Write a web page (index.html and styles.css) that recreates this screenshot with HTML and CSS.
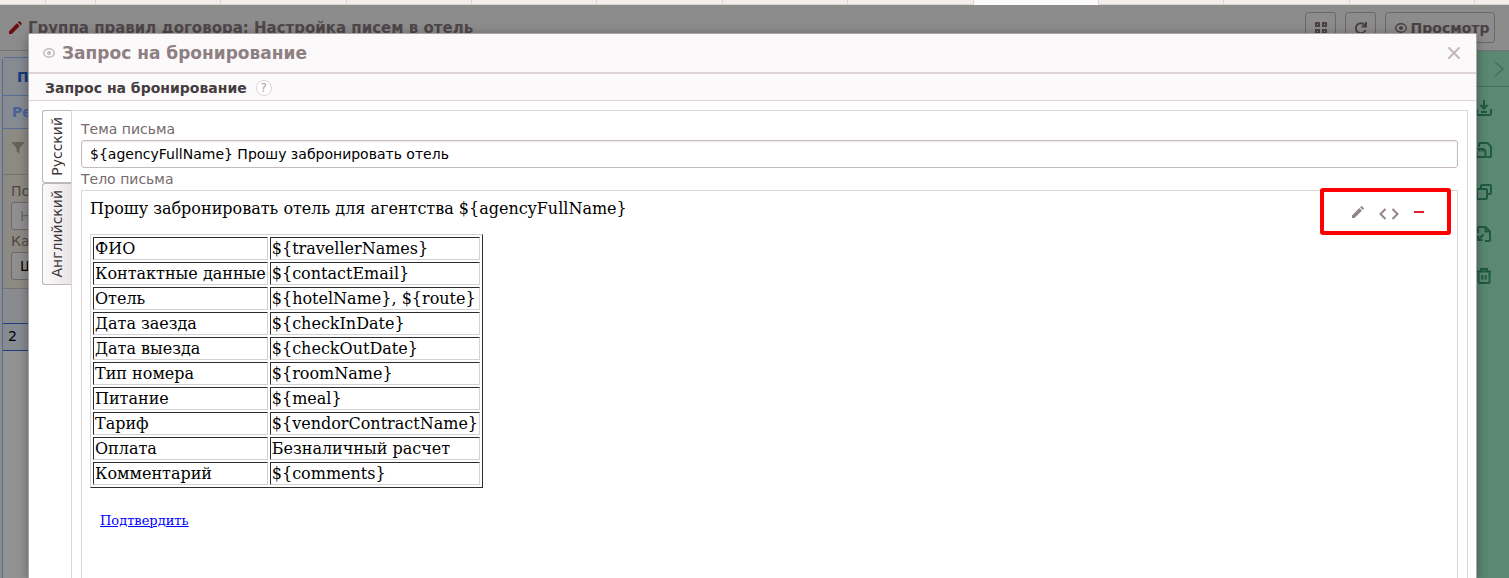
FILE: index.html
```html
<!DOCTYPE html>
<html lang="ru">
<head>
<meta charset="utf-8">
<title>Запрос на бронирование</title>
<link rel="stylesheet" href="styles.css">
</head>
<body>
<div class="app">
  <nav class="tabs" aria-label="Вкладки">
    <span class="tab tab-home"></span><span class="tab tab-small"></span><span class="tab"></span><span class="tab"></span><span class="tab"></span><span class="tab"></span><span class="tab"></span><span class="tab"></span><span class="tab"></span><span class="tab tab-active"></span><span class="tab"></span><span class="tab"></span><span class="tab"></span><span class="tab tab-last"></span>
  </nav>
  <header class="page-head">
    <svg class="pencil" viewBox="0 0 12 12" width="13" height="13"><path d="M0 12V9.400L7.300 2.100 9.900 4.700 2.600 12ZM8.100 1.300 9.100.300Q9.500 0 9.900.300L11.700 2.100Q12 2.500 11.700 2.900L10.700 3.900Z" fill="#6d0d14"/></svg>
    <h1 class="page-title">Группа правил договора: Настройка писем в отель</h1>
    <div class="page-actions">
      <button class="btn" aria-label="Плитка"><svg viewBox="0 0 12 12" width="12" height="12" fill="none" stroke="#4c4145" stroke-width="2"><path d="M1 1h3v3H1zM8 1h3v3H8zM1 8h3v3H1zM8 8h3v3H8z"/></svg></button>
      <button class="btn" aria-label="Обновить"><svg viewBox="0 0 12 12" width="12" height="12" fill="none" stroke="#4c4145" stroke-width="2"><path d="M10 3.500A5 5 0 1 0 10.500 8M11 0v4.500H6.500"/></svg></button>
      <button class="btn btn-wide"><svg viewBox="0 0 12 12" width="12" height="12" fill="none" stroke="#4c4145"><ellipse cx="6" cy="6" rx="5.300" ry="4.200" stroke-width="1.400"/><circle cx="6" cy="6" r="1" stroke-width="2"/></svg>Просмотр</button>
    </div>
  </header>
  <div class="workspace">
    <section class="panel">
      <div class="panel-tab">П</div>
      <div class="panel-sub">Ре</div>
      <div class="filter-bar"><svg viewBox="0 0 12 12" width="12" height="12"><path d="M0 0h12v1L7.500 6v5.500L4.500 9V6L0 1Z" fill="#65615b"/></svg></div>
      <div class="filter-form">
        <label class="f-label" for="f1">По</label>
        <input class="f-input" id="f1" type="text" placeholder="Н">
        <label class="f-label" for="f2">Ка</label>
        <input class="f-input" id="f2" type="text" value="Ш">
      </div>
      <div class="list-head"></div>
      <div class="list-row">2</div>
      <div class="list-rest"></div>
    </section>
    <aside class="rail">
      <button class="rail-toggle" aria-label="Развернуть"><svg viewBox="0 0 10 16" width="10" height="16" fill="none" stroke="#42705a" stroke-width="1.500"><path d="M1 1 9 8 1 15"/></svg></button>
      <button class="rail-btn" aria-label="Скачать"><svg viewBox="0 0 16 16"><path d="M1 9v4.500Q1 15 2.500 15h11Q15 15 15 13.500V9M8 0v8M4.500 5 8 8.500 11.500 5M5 12h6"/></svg></button>
      <button class="rail-btn" aria-label="Сохранить"><svg viewBox="0 0 16 16"><path d="M3 5V2Q3 1 4 1h7.500L15 4.500V14q0 1-1 1h-3M0 7h7.500L9.500 9v6H1zM3.500 7v2.500M6.500 7v2.500"/></svg></button>
      <button class="rail-btn" aria-label="Копировать"><svg viewBox="0 0 16 16"><path d="M5 5V2Q5 1 6 1h8q1 0 1 1v7q0 1-1 1h-3M2 5h8q1 0 1 1v8q0 1-1 1H2q-1 0-1-1V6q0-1 1-1Z"/></svg></button>
      <button class="rail-btn" aria-label="Импорт"><svg viewBox="0 0 16 16"><path d="M2 7V2Q2 1 3 1h6.500L14 5.500V14q0 1-1 1H9M9.500 1v4.500H14M7.500 8.500 2 14M2 9.500V14h4.500"/></svg></button>
      <button class="rail-btn" aria-label="Удалить"><svg viewBox="0 0 16 16"><path d="M1 3.500h14M5 3V1h6v2M2.500 4v9.500Q2.500 15 4 15h8q1.500 0 1.500-1.500V4M6.300 7v4.500M9.700 7v4.500"/></svg></button>
    </aside>
  </div>

  <div class="modal" role="dialog" aria-labelledby="dlg-title">
    <header class="modal-head">
      <svg viewBox="0 0 12 10" width="12" height="10" fill="none" stroke="#c3b9bb"><ellipse cx="6" cy="5" rx="5.200" ry="4.200" stroke-width="1.500"/><circle cx="6" cy="5" r="1" stroke-width="2"/></svg>
      <h2 class="modal-title" id="dlg-title">Запрос на бронирование</h2>
      <button class="close" aria-label="Закрыть"><svg viewBox="0 0 12 12" width="12" height="12" stroke="#c3b8ba" stroke-width="2" stroke-linecap="round"><path d="M1 1 11 11M11 1 1 11"/></svg></button>
    </header>
    <div class="modal-sub">
      <h3 class="sub-title">Запрос на бронирование</h3>
      <button class="help">?</button>
    </div>
    <div class="modal-body">
      <div class="langs" role="tablist">
        <button class="lang lang-on" role="tab"><span>Русский</span></button>
        <button class="lang" role="tab"><span>Английский</span></button>
      </div>
      <div class="letter">
        <label class="label" for="subject">Тема письма</label>
        <input class="subject" id="subject" type="text" value="${agencyFullName} Прошу забронировать отель">
        <div class="label">Тело письма</div>
        <div class="content">
          <p class="intro">Прошу забронировать отель для агентства ${agencyFullName}</p>
          <table class="data">
            <tr><td>ФИО</td><td>${travellerNames}</td></tr>
            <tr><td>Контактные данные</td><td>${contactEmail}</td></tr>
            <tr><td>Отель</td><td>${hotelName}, ${route}</td></tr>
            <tr><td>Дата заезда</td><td>${checkInDate}</td></tr>
            <tr><td>Дата выезда</td><td>${checkOutDate}</td></tr>
            <tr><td>Тип номера</td><td>${roomName}</td></tr>
            <tr><td>Питание</td><td>${meal}</td></tr>
            <tr><td>Тариф</td><td>${vendorContractName}</td></tr>
            <tr><td>Оплата</td><td>Безналичный расчет</td></tr>
            <tr><td>Комментарий</td><td>${comments}</td></tr>
          </table>
          <a class="confirm" href="#">Подтвердить</a>
          <div class="tools">
            <button class="tool" aria-label="Редактировать"><svg viewBox="0 0 12 12" width="12" height="12"><path d="M0 12V9.400L7.300 2.100 9.900 4.700 2.600 12ZM8.100 1.300 9.100.300Q9.500 0 9.900.300L11.700 2.100Q12 2.500 11.700 2.900L10.700 3.900Z" fill="#958387"/></svg></button>
            <button class="tool tool-code" aria-label="Код"><svg viewBox="0 0 20 12" width="20" height="12" fill="none" stroke="#958387" stroke-width="2"><path d="M6.500 1 1.500 6l5 5M13.500 1l5 5-5 5"/></svg></button>
            <button class="tool" aria-label="Убрать"><svg viewBox="0 0 10 2" width="10" height="2"><path d="M0 0h10v2H0z" fill="#e3202c"/></svg></button>
          </div>
        </div>
      </div>
    </div>
  </div>
</div>
</body>
</html>
```
FILE: styles.css
```css
* { box-sizing: border-box; }
body {
  margin: 0;
  font-family: "DejaVu Sans", sans-serif;
  font-size: 14px;
  color: #000;
  overflow: hidden;
}
button { font: inherit; padding: 0; margin: 0; background: none; border: 0; color: inherit; }
h1, h2, h3, p { margin: 0; }
svg { display: block; flex: none; }

.app {
  position: relative;
  height: 100vh;
  display: flex;
  flex-direction: column;
  background: #8c8c8c;
}

.tabs { display: flex; height: 5px; flex: none; background: #f3edec; }
.tab { flex: 1; border-right: 1px solid #ddd5d7; border-bottom: 1px solid #ddd5d7; }
.tab-home { flex: 0 0 46px; }
.tab-small { flex: 0 0 50px; }
.tab-last { flex: 0 0 34px; border-right: 0; }
.tab-active { background: #fbf9fa; border-bottom-color: #fbf9fa; }

.page-head {
  display: flex;
  align-items: center;
  flex: none;
  height: 46px;
  padding: 0 14px 0 9px;
  border-bottom: 1px solid #777173;
}
.page-title { margin-left: 6px; font-size: 15px; line-height: 20px; color: #504649; }
.page-actions { display: flex; gap: 9px; margin-left: auto; }
.btn {
  display: flex;
  align-items: center;
  justify-content: center;
  gap: 4px;
  width: 31px;
  height: 31px;
  border: 1px solid #6e6668;
  border-radius: 3px;
  color: #4c4145;
  font-weight: bold;
}
.btn-wide { width: 110px; padding-left: 4px; }

.workspace { flex: 1; display: flex; justify-content: space-between; min-height: 0; }

.panel {
  display: flex;
  flex-direction: column;
  width: 50%;
  margin: 6px 0 0 2px;
  border: 1px solid #536d96;
  border-right: 0;
  border-bottom: 0;
  border-radius: 4px 0 0 0;
}
.panel-tab { height: 38px; padding-left: 14px; line-height: 38px; border-bottom: 1px solid #536d96; color: #143a7c; font-weight: bold; background: #868a91; }
.panel-sub { height: 33px; padding-left: 9px; line-height: 32px; border-bottom: 1px solid #536d96; color: #496396; font-weight: bold; background: #868a91; }
.filter-bar { height: 46px; padding: 13px 9px; border-bottom: 1px solid #77736e; background: #8d8983; }
.filter-form { display: flex; flex-direction: column; height: 114px; padding: 5px 8px; border-bottom: 1px solid #77736e; background: #8d8983; }
.f-label { line-height: 22px; color: #514546; }
.f-input { height: 28px; padding: 0 8px; border: 1px solid #6e6668; border-radius: 3px; background: #8f8f8f; font: inherit; color: #000; }
.f-input::placeholder { color: #6b6278; opacity: 1; }
.list-head { height: 35px; border-bottom: 1px solid #1b407d; background: #898b90; }
.list-row { height: 27px; padding-left: 5px; line-height: 24px; border-bottom: 1px solid #1b407d; background: #868a91; }
.list-rest { flex: 1; background: #929292; }

.rail { display: flex; flex-direction: column; width: 46px; background: #5a8872; color: #1f5a42; }
.rail-toggle { display: flex; justify-content: flex-end; align-items: center; height: 36px; padding-right: 5px; border-bottom: 1px solid #456f5b; }
.rail-btn { height: 42px; padding-left: 13px; }
.rail-btn svg { width: 16px; height: 16px; fill: none; stroke: currentColor; stroke-width: 2; }

.modal {
  position: absolute;
  inset: 34px 33px 0 29px;
  display: flex;
  flex-direction: column;
  background: #fff;
  border-radius: 2px 2px 0 0;
  box-shadow: 0 0 0 1px #aaa4a6, 0 2px 12px rgba(0, 0, 0, 0.4);
}
.modal-head { display: flex; align-items: center; height: 40px; padding: 0 16px 0 14px; border-bottom: 2px solid #ddd5d7; background: #fbf9fa; }
.modal-title { margin-left: 7px; font-size: 17px; line-height: 22px; color: #8e7f82; }
.close { margin-left: auto; }
.modal-sub { display: flex; align-items: center; gap: 9px; height: 27px; padding: 2px 0 0 16px; border-bottom: 1px solid #ddd5d7; background: #fbf9fa; }
.sub-title { font-size: 14px; line-height: 20px; color: #443c3e; }
.help { width: 16px; height: 16px; border: 1px solid #ddd5d7; border-radius: 50%; font-size: 12px; line-height: 14px; color: #a99ea1; background: #fff; }

.modal-body { flex: 1; display: flex; min-height: 0; padding: 9px 8px 0 13px; }
.langs { display: flex; flex-direction: column; width: 29px; }
.lang {
  display: flex;
  align-items: center;
  justify-content: center;
  height: 102px;
  border: 1px solid #bdb7b8;
  border-right: 0;
  border-radius: 3px 0 0 3px;
  background: linear-gradient(to right, #fbf9fa, #e9e5e6);
  color: #3f3739;
}
.lang span { writing-mode: vertical-rl; transform: rotate(180deg); }
.lang-on { height: 73px; background: #fff; }
.letter {
  flex: 1;
  display: flex;
  flex-direction: column;
  min-width: 0;
  padding: 7px 9px 0;
  border: 1px solid #ddd5d7;
  border-bottom: 0;
}
.label { line-height: 22px; color: #756a6c; }
.subject {
  width: 100%;
  height: 28px;
  padding: 0 8px;
  border: 1px solid #c5bbbd;
  border-radius: 3px;
  font: inherit;
  color: #000;
  background: #fff;
  box-shadow: inset 0 1px 2px #eee9ea;
}
.content {
  position: relative;
  flex: 1;
  padding: 8px;
  border: 1px solid #ddd5d7;
  border-bottom: 0;
  font-family: "DejaVu Serif", serif;
  font-size: 16px;
}
.intro { margin-bottom: 16px; line-height: 19px; }
.data { border: 1px solid; border-color: #d3d3d3 #2c2c2c #2c2c2c #d3d3d3; border-spacing: 2px; }
.data td { padding: 1px; line-height: 19px; border: 1px solid; border-color: #2c2c2c #d3d3d3 #d3d3d3 #2c2c2c; }
.confirm { display: inline-block; margin: 25px 0 0 10px; font-size: 13px; line-height: 16px; color: #00f; }
/* Highlighted block tools float over the letter */
.tools {
  position: absolute;
  top: -3px;
  right: 6px;
  display: flex;
  align-items: center;
  gap: 15px;
  width: 131px;
  height: 47px;
  padding-left: 28px;
  border: 4px solid #f00;
  border-radius: 3px;
}
.tool-code { padding-top: 5px; }
```
